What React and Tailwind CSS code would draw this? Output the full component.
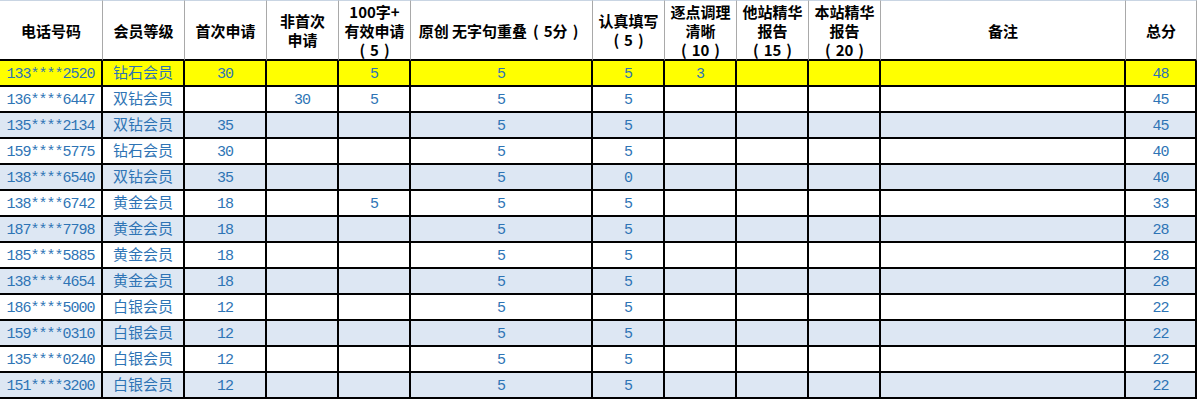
import React from 'react';

const headers = [
  ['电话号码'],
  ['会员等级'],
  ['首次申请'],
  ['非首次', '申请'],
  ['100字+', '有效申请', '（5）'],
  ['原创 无字句重叠（5分）'],
  ['认真填写', '（5）'],
  ['逐点调理', '清晰', '（10）'],
  ['他站精华', '报告', '（15）'],
  ['本站精华', '报告', '（20）'],
  ['备注'],
  ['总分'],
];

const rows = [
  ['133****2520', '钻石会员', '30', '', '5', '5', '5', '3', '', '', '', '48'],
  ['136****6447', '双钻会员', '', '30', '5', '5', '5', '', '', '', '', '45'],
  ['135****2134', '双钻会员', '35', '', '', '5', '5', '', '', '', '', '45'],
  ['159****5775', '钻石会员', '30', '', '', '5', '5', '', '', '', '', '40'],
  ['138****6540', '双钻会员', '35', '', '', '5', '0', '', '', '', '', '40'],
  ['138****6742', '黄金会员', '18', '', '5', '5', '5', '', '', '', '', '33'],
  ['187****7798', '黄金会员', '18', '', '', '5', '5', '', '', '', '', '28'],
  ['185****5885', '黄金会员', '18', '', '', '5', '5', '', '', '', '', '28'],
  ['138****4654', '黄金会员', '18', '', '', '5', '5', '', '', '', '', '28'],
  ['186****5000', '白银会员', '12', '', '', '5', '5', '', '', '', '', '22'],
  ['159****0310', '白银会员', '12', '', '', '5', '5', '', '', '', '', '22'],
  ['135****0240', '白银会员', '12', '', '', '5', '5', '', '', '', '', '22'],
  ['151****3200', '白银会员', '12', '', '', '5', '5', '', '', '', '', '22'],
];

const rowBg = (i) => {
  if (i === 0) return 'bg-[#ffff00]';
  return i % 2 === 1 ? 'bg-white' : 'bg-[#dde7f3]';
};

const HeaderLine = ({ text }) => {
  const m = text.match(/^(.*)（(.*)）$/);
  if (!m) return <span className="whitespace-nowrap">{text}</span>;
  return (
    <span className="whitespace-nowrap">
      {m[1]}
      <span className="ml-[6px] mr-[5px]">(</span>
      {m[2]}
      <span className="ml-[5px] mr-[6px]">)</span>
    </span>
  );
};

export default function App() {
  return (
    <div className="w-[1197px] h-[399px] bg-white overflow-hidden">
      <div className="grid grid-cols-[103px_82px_82px_72px_72px_182px_72px_72px_72px_72px_245px_71px] grid-rows-[61px_repeat(13,26px)]">
        {headers.map((lines, i) => (
          <div
            key={'h' + i}
            className="flex flex-col items-center justify-center border-t border-t-[#c9d5e3] border-r border-r-[#a9a9a9] border-b-2 border-b-black bg-white text-center text-[15px] leading-[19px] font-bold text-black [font-family:'Noto_Sans_CJK_SC',sans-serif]"
          >
            {lines.map((l, j) => (
              <HeaderLine key={j} text={l} />
            ))}
          </div>
        ))}
        {rows.map((row, r) =>
          row.map((cell, c) => (
            <div
              key={r + '-' + c}
              className={`${rowBg(r)} flex items-center justify-center pt-[2px] border-r-2 border-b-2 border-black text-[#2e74b5] text-[15px] leading-none whitespace-nowrap [font-family:'Liberation_Mono','Noto_Sans_CJK_SC',monospace] ${
                c === 1 ? '' : 'tracking-[-1px]'
              }`}
            >
              {cell}
            </div>
          ))
        )}
      </div>
    </div>
  );
}
